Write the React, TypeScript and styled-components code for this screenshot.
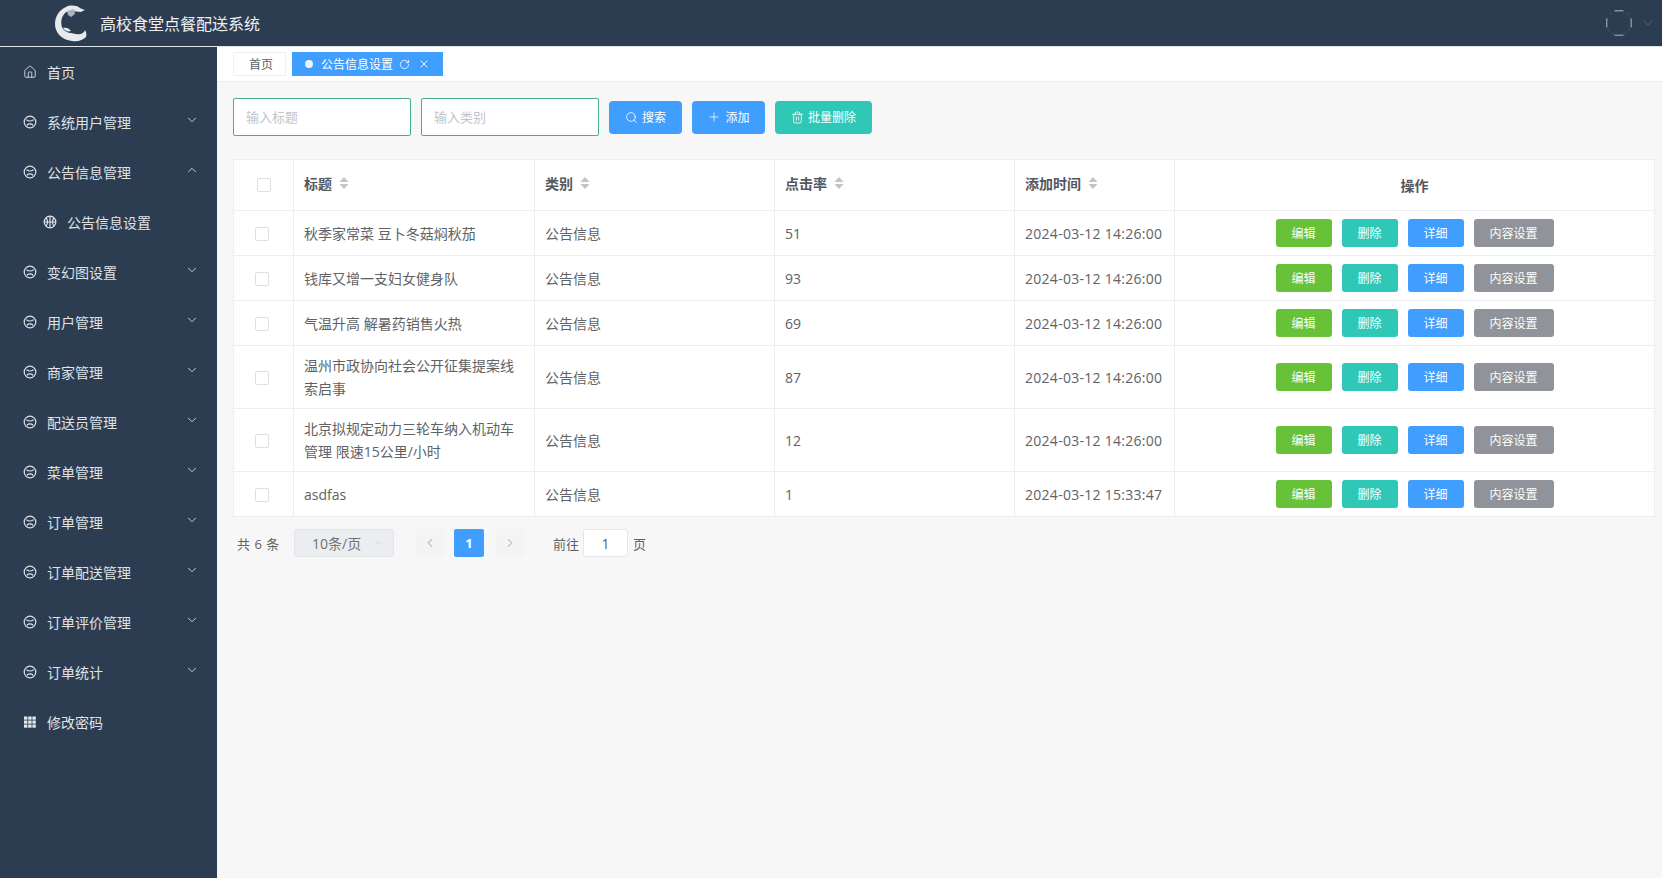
import React from "react";
import styled, { createGlobalStyle } from "styled-components";
import { ChevronDown, ChevronUp, ChevronLeft, ChevronRight, Home, Search, Plus, Trash2, RotateCw, X } from "lucide-react";

const Global = createGlobalStyle`
  html, body { margin: 0; padding: 0; background: #f7f7f8; }
  body { font-family: "Open Sans", "Noto Sans CJK SC", sans-serif; }
  * { box-sizing: border-box; }
`;

const Page = styled.div`
  width: 1662px;
  height: 878px;
  overflow: hidden;
  display: flex;
  flex-direction: column;
`;
const Header = styled.header`
  height: 47px;
  flex: none;
  background: #2c3d52;
  border-bottom: 1px solid #dfe4ea;
  display: flex;
  align-items: center;
  padding-left: 54px;
  padding-right: 6px;
`;
const Title = styled.div`
  margin-left: 10px;
  font-size: 16px;
  color: #eef1f4;
  white-space: nowrap;
  flex: 1;
`;
const Avatar = styled.span`
  display: flex;
  margin-right: 8px;
`;
const Body = styled.div`
  flex: 1;
  display: flex;
  min-height: 0;
`;
const Sidebar = styled.nav`
  width: 217px;
  flex: none;
  background: #2c3d52;
`;
const MenuItem = styled.div<{ $sub?: boolean }>`
  height: 50px;
  display: flex;
  align-items: center;
  padding-left: ${(p) => (p.$sub ? "43px" : "23px")};
  padding-right: 18px;
  gap: 10px;
  color: #dfe3e8;
  font-size: 14px;
  svg { flex: none; }
`;
const MenuLabel = styled.span`
  flex: 1;
`;
const MenuChevron = styled.span`
  display: flex;
  color: #d0d6dd;
  margin-top: -4px;
`;
const Main = styled.main`
  flex: 1;
  min-width: 0;
  display: flex;
  flex-direction: column;
`;
const TabBar = styled.div`
  height: 35px;
  flex: none;
  background: #fff;
  border-bottom: 1px solid #e9ebee;
  display: flex;
  align-items: flex-start;
  gap: 6px;
  padding: 5px 0 0 16px;
`;
const Tab = styled.div<{ $active?: boolean }>`
  height: 24px;
  display: flex;
  align-items: center;
  font-size: 12px;
  padding: ${(p) => (p.$active ? "0 12px" : "0 12px 0 15px")};
  gap: 5px;
  color: ${(p) => (p.$active ? "#fff" : "#5c6066")};
  background: ${(p) => (p.$active ? "#409eff" : "#fff")};
  border: 1px solid ${(p) => (p.$active ? "#409eff" : "#f0f1f3")};
`;
const TabDot = styled.span`
  width: 8px;
  height: 8px;
  border-radius: 50%;
  background: #eaf4ff;
  margin-right: 3px;
`;
const TabIcons = styled.span`
  display: flex;
  align-items: center;
  gap: 8px;
  margin-left: 1px;
`;
const Content = styled.div`
  flex: 1;
  padding: 16px 8px 0 16px;
`;
const Toolbar = styled.div`
  display: flex;
  align-items: center;
  height: 38px;
  gap: 10px;
`;
const SearchInput = styled.input`
  width: 178px;
  height: 38px;
  border: 1px solid #45b08c;
  border-radius: 2px;
  background: #fff;
  padding: 0 12px;
  font-family: inherit;
  font-size: 13px;
  outline: none;
  &::placeholder { color: #c0c4cc; }
`;
const ToolButton = styled.button<{ $bg: string; $w: number }>`
  width: ${(p) => p.$w}px;
  height: 33px;
  border: none;
  border-radius: 4px;
  background: ${(p) => p.$bg};
  color: #fff;
  font-family: inherit;
  font-size: 12px;
  display: flex;
  align-items: center;
  justify-content: center;
  gap: 4px;
  padding: 0;
`;
const Table = styled.table`
  margin-top: 23px;
  width: 1421px;
  table-layout: fixed;
  border-collapse: separate;
  border-spacing: 0;
  background: #fff;
  border-top: 1px solid #eceef2;
  border-left: 1px solid #eceef2;
  font-size: 14px;
  color: #606266;
`;
const Th = styled.th<{ $center?: boolean }>`
  height: 51px;
  padding: 0 10px;
  font-weight: 700;
  font-size: 14px;
  color: #53575e;
  text-align: ${(p) => (p.$center ? "center" : "left")};
  border-right: 1px solid #eceef2;
  border-bottom: 1px solid #eceef2;
`;
const HeadLabel = styled.span`
  display: flex;
  align-items: center;
  gap: 7px;
  margin-top: -4px;
`;
const Td = styled.td<{ $center?: boolean }>`
  padding: 8px 10px;
  line-height: 23px;
  font-weight: 400;
  text-align: ${(p) => (p.$center ? "center" : "left")};
  border-right: 1px solid #eceef2;
  border-bottom: 1px solid #eceef2;
`;
const TimeCell = styled(Td)`
  letter-spacing: 0.28px;
  white-space: nowrap;
`;
const Tr = styled.tr<{ $h: number }>`
  height: ${(p) => p.$h}px;
`;
const Check = styled.span<{ $head?: boolean }>`
  display: block;
  width: 14px;
  height: 14px;
  border: 1px solid #dcdfe6;
  border-radius: 2px;
  background: #fff;
  margin: ${(p) => (p.$head ? "0 0 0 13px" : "2px 0 0 11px")};
`;
const Actions = styled.div`
  display: flex;
  justify-content: center;
  gap: 10px;
`;
const ActionButton = styled.button<{ $bg: string; $w: number }>`
  width: ${(p) => p.$w}px;
  height: 28px;
  border: none;
  border-radius: 3px;
  background: ${(p) => p.$bg};
  color: #fff;
  font-family: inherit;
  font-size: 12px;
  padding: 0;
`;
const Pager = styled.div`
  display: flex;
  align-items: center;
  height: 28px;
  margin-top: 12px;
  padding-left: 4px;
  font-size: 13px;
  color: #606266;
`;
const Total = styled.span`
  width: 57px;
  word-spacing: 1px;
`;
const PageSize = styled.div`
  width: 100px;
  height: 28px;
  background: #ebedf0;
  border: 1px solid #e2e4e8;
  border-radius: 3px;
  display: flex;
  align-items: center;
  justify-content: space-between;
  padding: 0 8px 0 17px;
  font-size: 14px;
  color: #6f7378;
`;
const PageNav = styled.div`
  width: 28px;
  height: 28px;
  display: flex;
  align-items: center;
  justify-content: center;
  background: #f4f4f5;
  color: #c0c4cc;
  border-radius: 2px;
`;
const PagePrev = styled(PageNav)`
  margin-left: 22px;
`;
const PageNext = styled(PageNav)`
  margin-left: 12px;
`;
const PageCurrent = styled.div`
  width: 30px;
  height: 28px;
  margin-left: 10px;
  display: flex;
  align-items: center;
  justify-content: center;
  background: #409eff;
  color: #fff;
  font-weight: 700;
  border-radius: 2px;
`;
const JumpLabel = styled.span`
  margin-left: 29px;
`;
const JumpInput = styled.div`
  width: 45px;
  height: 28px;
  margin: 0 5px 0 4px;
  background: #fff;
  border: 1px solid #e4e7ed;
  border-radius: 3px;
  display: flex;
  align-items: center;
  justify-content: center;
  font-size: 14px;
`;

const Logo = () => (
  <svg width="36" height="40" viewBox="14 4 36 40" fill="none">
    <path
      d="M40 9C36 6 30 6 26 8C19 11 15 18 15 25C15 34 22 41 32 42C38 43 43 41 46 38C47 35 46 33 45 31C44 34 41 36 36 35C31 34 26 34 23 30C20 25 21 18 25 14C29 11 36 13 41 13C43 12 44 11 45 11C43 10 41 10 40 9Z"
      fill="#e6eaee"
    />
    <path d="M27 12L34 10L35 15L31 18L28 16Z" fill="#aab4bf" />
    <path d="M23 29C26 28 29 29 31 32C28 33 25 32 23 29Z" fill="#e6eaee" />
  </svg>
);
const AvatarRing = () => (
  <svg width="26" height="26" viewBox="0 0 26 26" fill="none" strokeLinecap="round">
    <circle cx="13" cy="13" r="12.5" stroke="#4a5b70" strokeWidth="0.8" strokeDasharray="3 3" />
    <path d="M9 .8H17M9 25.2H17M.8 9V17M25.2 9V17" stroke="#b8c2cd" strokeWidth="0.9" />
  </svg>
);
const FaceIcon = () => (
  <svg width="14" height="14" viewBox="0 0 14 14" fill="none" stroke="#dce0e6" strokeWidth="1.2" strokeLinecap="round">
    <circle cx="7" cy="7" r="5.8" />
    <path d="M3.8 5C5.5 6.3 8.5 6.3 10.2 5" />
    <path d="M4.2 10C5.5 8.4 8.5 8.4 9.8 10" />
  </svg>
);
const BallIcon = () => (
  <svg width="14" height="14" viewBox="0 0 14 14" fill="none" stroke="#e4e7eb" strokeWidth="1.2">
    <circle cx="7" cy="7" r="5.8" />
    <path d="M1.4 7H12.6M7 1.2V12.8M3 3C5 5 5 9 3 11M11 3C9 5 9 9 11 11" />
  </svg>
);
const GridIcon = () => (
  <svg width="14" height="14" viewBox="0 0 14 14" fill="#e4e7eb">
    {[1, 5.2, 9.4].map((x) =>
      [1.5, 5.5, 9.5].map((y) => <rect key={`${x}-${y}`} x={x} y={y} width="3.4" height="3.2" />)
    )}
  </svg>
);
const SortCaret = () => (
  <svg width="10" height="14" viewBox="0 0 10 14" fill="#c0c4cc">
    <path d="M5 1L9.5 6H.5Z" />
    <path d="M5 13L.5 8H9.5Z" />
  </svg>
);

const menu = [
  { label: "首页", icon: "home" },
  { label: "系统用户管理", icon: "face", chevron: "down" },
  { label: "公告信息管理", icon: "face", chevron: "up" },
  { label: "公告信息设置", icon: "ball", sub: true },
  { label: "变幻图设置", icon: "face", chevron: "down" },
  { label: "用户管理", icon: "face", chevron: "down" },
  { label: "商家管理", icon: "face", chevron: "down" },
  { label: "配送员管理", icon: "face", chevron: "down" },
  { label: "菜单管理", icon: "face", chevron: "down" },
  { label: "订单管理", icon: "face", chevron: "down" },
  { label: "订单配送管理", icon: "face", chevron: "down" },
  { label: "订单评价管理", icon: "face", chevron: "down" },
  { label: "订单统计", icon: "face", chevron: "down" },
  { label: "修改密码", icon: "grid" },
];

const rows = [
  { title: "秋季家常菜 豆卜冬菇焖秋茄", hits: "51", time: "2024-03-12 14:26:00", h: 45 },
  { title: "钱库又增一支妇女健身队", hits: "93", time: "2024-03-12 14:26:00", h: 45 },
  { title: "气温升高 解暑药销售火热", hits: "69", time: "2024-03-12 14:26:00", h: 45 },
  { title: "温州市政协向社会公开征集提案线索启事", hits: "87", time: "2024-03-12 14:26:00", h: 63 },
  { title: "北京拟规定动力三轮车纳入机动车管理 限速15公里/小时", hits: "12", time: "2024-03-12 14:26:00", h: 63 },
  { title: "asdfas", hits: "1", time: "2024-03-12 15:33:47", h: 45 },
];

const iconFor = (name: string) => {
  if (name === "home") return <Home size={14} strokeWidth={1.5} color="#dce0e6" />;
  if (name === "ball") return <BallIcon />;
  if (name === "grid") return <GridIcon />;
  return <FaceIcon />;
};

const heads = ["标题", "类别", "点击率", "添加时间"];

export default function App() {
  return (
    <Page>
      <Global />
      <Header>
        <Logo />
        <Title>高校食堂点餐配送系统</Title>
        <Avatar>
          <AvatarRing />
        </Avatar>
        <ChevronDown size={16} strokeWidth={1.2} color="#5b6c80" />
      </Header>
      <Body>
        <Sidebar>
          {menu.map((m) => (
            <MenuItem key={m.label} $sub={m.sub}>
              {iconFor(m.icon)}
              <MenuLabel>{m.label}</MenuLabel>
              {m.chevron && (
                <MenuChevron>
                  {m.chevron === "down" ? <ChevronDown size={14} strokeWidth={1.6} /> : <ChevronUp size={14} strokeWidth={1.6} />}
                </MenuChevron>
              )}
            </MenuItem>
          ))}
        </Sidebar>
        <Main>
          <TabBar>
            <Tab>首页</Tab>
            <Tab $active>
              <TabDot />
              公告信息设置
              <TabIcons>
                <RotateCw size={11} strokeWidth={1.8} />
                <X size={12} strokeWidth={1.8} />
              </TabIcons>
            </Tab>
          </TabBar>
          <Content>
            <Toolbar>
              <SearchInput placeholder="输入标题" />
              <SearchInput placeholder="输入类别" />
              <ToolButton $bg="#409eff" $w={73}>
                <Search size={13} strokeWidth={1.5} />
                搜索
              </ToolButton>
              <ToolButton $bg="#409eff" $w={73}>
                <Plus size={14} strokeWidth={1.3} />
                添加
              </ToolButton>
              <ToolButton $bg="#2fc7b5" $w={97}>
                <Trash2 size={13} strokeWidth={1.5} />
                批量删除
              </ToolButton>
            </Toolbar>
            <Table>
              <colgroup>
                <col width="60" />
                <col width="241" />
                <col width="240" />
                <col width="240" />
                <col width="160" />
                <col width="480" />
              </colgroup>
              <thead>
                <tr>
                  <Th>
                    <Check $head />
                  </Th>
                  {heads.map((h) => (
                    <Th key={h}>
                      <HeadLabel>
                        {h}
                        <SortCaret />
                      </HeadLabel>
                    </Th>
                  ))}
                  <Th $center>操作</Th>
                </tr>
              </thead>
              <tbody>
                {rows.map((r) => (
                  <Tr key={r.title} $h={r.h}>
                    <Td>
                      <Check />
                    </Td>
                    <Td>{r.title}</Td>
                    <Td>公告信息</Td>
                    <Td>{r.hits}</Td>
                    <TimeCell>{r.time}</TimeCell>
                    <Td $center>
                      <Actions>
                        <ActionButton $bg="#67c23a" $w={56}>编辑</ActionButton>
                        <ActionButton $bg="#2fc7b5" $w={56}>删除</ActionButton>
                        <ActionButton $bg="#409eff" $w={56}>详细</ActionButton>
                        <ActionButton $bg="#909399" $w={80}>内容设置</ActionButton>
                      </Actions>
                    </Td>
                  </Tr>
                ))}
              </tbody>
            </Table>
            <Pager>
              <Total>共 6 条</Total>
              <PageSize>
                10条/页
                <ChevronDown size={12} strokeWidth={1.2} color="#c0c4cc" />
              </PageSize>
              <PagePrev>
                <ChevronLeft size={14} />
              </PagePrev>
              <PageCurrent>1</PageCurrent>
              <PageNext>
                <ChevronRight size={14} />
              </PageNext>
              <JumpLabel>前往</JumpLabel>
              <JumpInput>1</JumpInput>
              <span>页</span>
            </Pager>
          </Content>
        </Main>
      </Body>
    </Page>
  );
}
